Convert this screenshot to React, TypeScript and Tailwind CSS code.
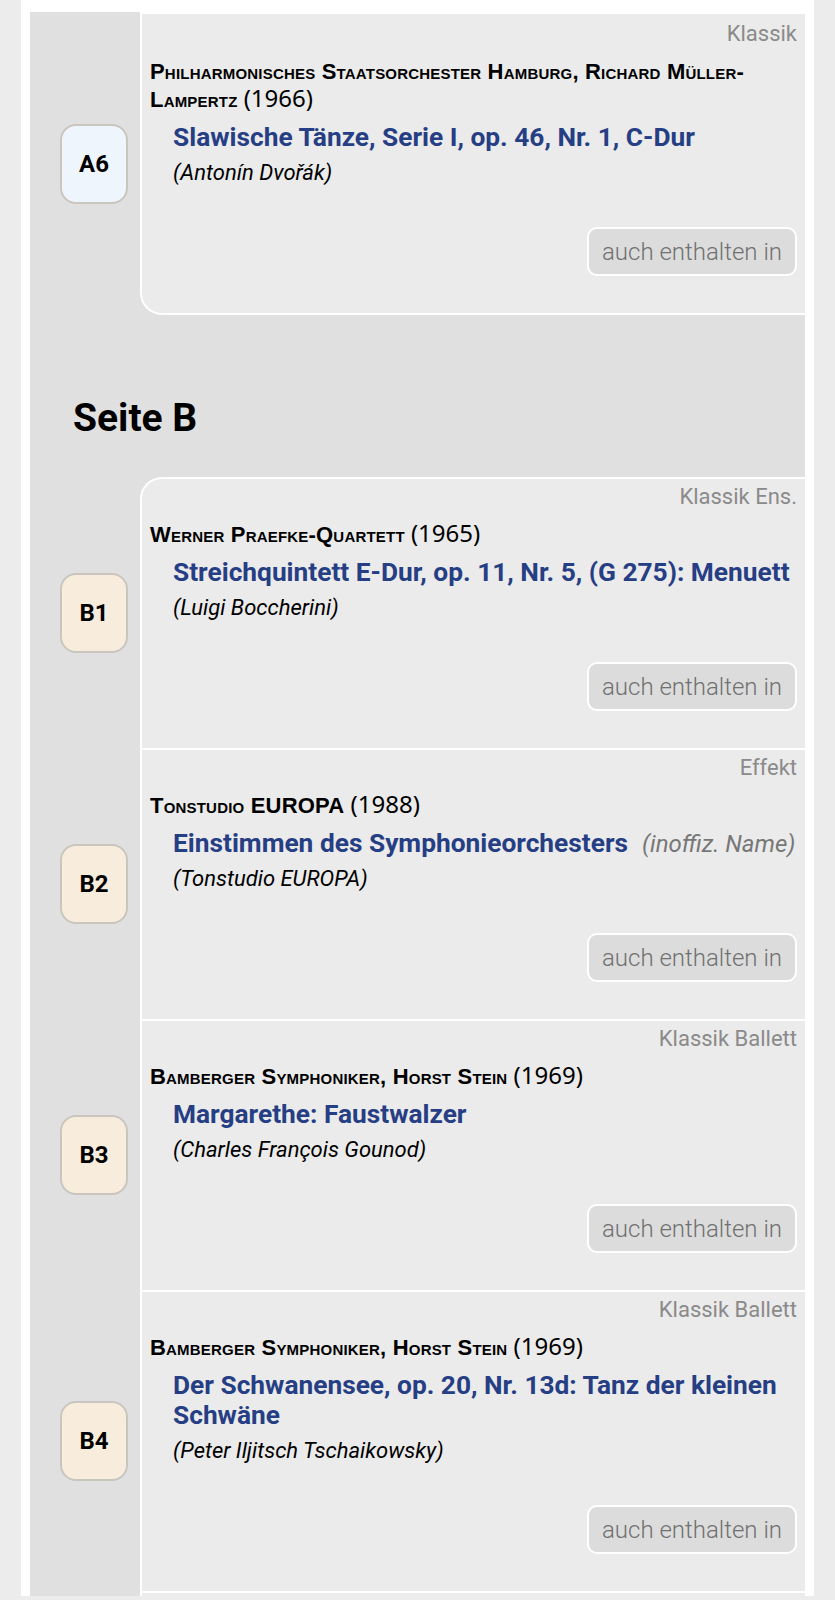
import React from 'react';

type Track = {
  pos: string;
  genre: string;
  performer: string;
  year: string;
  title: string;
  note?: string;
  composer: string;
};

const sideA: Track[] = [
  {
    pos: 'A6',
    genre: 'Klassik',
    performer: 'Philharmonisches Staatsorchester Hamburg, Richard Müller-Lampertz',
    year: '(1966)',
    title: 'Slawische Tänze, Serie I, op. 46, Nr. 1, C-Dur',
    composer: '(Antonín Dvořák)',
  },
];

const sideB: Track[] = [
  {
    pos: 'B1',
    genre: 'Klassik Ens.',
    performer: 'Werner Praefke-Quartett',
    year: '(1965)',
    title: 'Streichquintett E-Dur, op. 11, Nr. 5, (G 275): Menuett',
    composer: '(Luigi Boccherini)',
  },
  {
    pos: 'B2',
    genre: 'Effekt',
    performer: 'Tonstudio EUROPA',
    year: '(1988)',
    title: 'Einstimmen des Symphonieorchesters',
    note: '(inoffiz. Name)',
    composer: '(Tonstudio EUROPA)',
  },
  {
    pos: 'B3',
    genre: 'Klassik Ballett',
    performer: 'Bamberger Symphoniker, Horst Stein',
    year: '(1969)',
    title: 'Margarethe: Faustwalzer',
    composer: '(Charles François Gounod)',
  },
  {
    pos: 'B4',
    genre: 'Klassik Ballett',
    performer: 'Bamberger Symphoniker, Horst Stein',
    year: '(1969)',
    title: 'Der Schwanensee, op. 20, Nr. 13d: Tanz der kleinen Schwäne',
    composer: '(Peter Iljitsch Tschaikowsky)',
  },
];

function TrackRow({ t, first, last, side }: { t: Track; first?: boolean; last?: boolean; side: 'A' | 'B' }) {
  return (
    <div className="flex">
      <div className="w-[110px] shrink-0 flex items-center pl-[30px]">
        <div
          className={
            'w-[68px] h-[80px] rounded-[16px] border-2 border-[#c9c5bf] flex items-center justify-center text-[24px] font-bold text-black ' +
            (side === 'A' ? 'bg-[#eef5fc]' : 'bg-[#f8eddc]')
          }
        >
          {t.pos}
        </div>
      </div>
      <div
        className={
          'flex-1 min-w-0 bg-[#ebebeb] border-t-2 border-l-2 border-white pl-[8px] pr-[8px] pb-[37px] ' +
          (side === 'A' ? 'pt-[8px] ' : 'pt-[6px] ') +
          (first ? 'rounded-tl-[22px] ' : '') +
          (last ? 'rounded-bl-[22px] border-b-2 ' : '')
        }
      >
        <div className="text-right text-[22px] leading-[24px] text-[#8a8a8a]">{t.genre}</div>
        <div className="mt-[12px] text-[22px] leading-[28px] text-black font-['Liberation_Sans',sans-serif]">
          <span className="font-bold [font-variant:small-caps] tracking-[0.2px]">{t.performer}</span>{' '}
          <span className="font-['Noto_Sans',sans-serif] text-[24px] leading-none">{t.year}</span>
        </div>
        <div className="mt-[8px] ml-[23px] text-[26.3px] leading-[30px] font-bold text-[#263e84]">
          {t.title}
          {t.note && (
            <span className="ml-[14px] text-[24px] leading-none font-normal italic text-[#777777]">{t.note}</span>
          )}
        </div>
        <div className="mt-[7px] ml-[23px] text-[22px] leading-[28px] italic text-black">{t.composer}</div>
        <div className="mt-[40px] flex justify-end">
          <div className="h-[49px] px-[13px] flex items-center rounded-[10px] border-2 border-white bg-[#dcdcdc] text-[24px] font-light text-[#707070]">
            auch enthalten in
          </div>
        </div>
      </div>
    </div>
  );
}

export default function App() {
  return (
    <div className="min-h-screen bg-[#ececec] px-[21px] font-['Roboto',sans-serif]">
      <div className="bg-white px-[9px] pt-[12px]">
        <div className="bg-[#e0e0e0]">
          {sideA.map((t, i) => (
            <TrackRow key={t.pos} t={t} side="A" last={i === sideA.length - 1} />
          ))}

          <div className="pt-[79px] pb-[35px] pl-[43px]">
            <h2 className="text-[39px] leading-[48px] font-bold text-black">Seite B</h2>
          </div>

          {sideB.map((t, i) => (
            <TrackRow key={t.pos} t={t} side="B" first={i === 0} />
          ))}

          <div className="flex">
            <div className="w-[110px] shrink-0" />
            <div className="flex-1 h-[5px] bg-[#ebebeb] border-t-2 border-l-2 border-white" />
          </div>
        </div>
      </div>
    </div>
  );
}
